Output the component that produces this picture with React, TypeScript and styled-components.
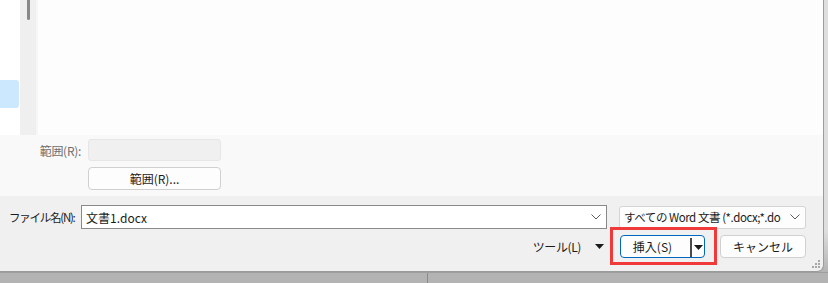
import styled, { createGlobalStyle } from 'styled-components';

const GlobalStyle = createGlobalStyle`
  html, body {
    margin: 0;
    padding: 0;
    background: #b4b4b4;
  }
  body {
    font-family: 'Noto Sans CJK JP', 'Noto Sans', sans-serif;
    font-size: 12px;
    color: #1b1b1b;
  }
`;

const Desktop = styled.div`
  width: 828px;
  height: 283px;
  overflow: hidden;
  display: flex;
  flex-direction: column;
  background: #b4b4b4;
`;

const TopRow = styled.div`
  display: flex;
  height: 272px;
`;

const RightStrip = styled.div`
  flex: 1;
  background: linear-gradient(#dedede 0, #dedede 230px, #b4b4b4 272px);
`;

const Window = styled.div`
  width: 823px;
  height: 271px;
  display: flex;
  flex-direction: column;
  border-right: 1px solid #9c9c9c;
  border-bottom: 1px solid #9a9a9a;
  border-bottom-right-radius: 7px;
  overflow: hidden;
  background: #f0f0f0;
`;

const Behind = styled.div`
  flex: 1;
  display: flex;
  border-top: 1px solid #9e9e9e;
`;

const BehindPane = styled.div<{ $width?: number }>`
  width: ${(p) => (p.$width ? `${p.$width}px` : 'auto')};
  flex: ${(p) => (p.$width ? 'none' : 1)};
  border-right: ${(p) => (p.$width ? '1px solid #8c8c8c' : 'none')};
  background: #b3b3b3;
`;

const Browser = styled.div`
  height: 135px;
  display: flex;
  background: #fdfdfd;
`;

const NavPane = styled.div`
  width: 20px;
  background: #ffffff;
  padding-top: 80px;
  box-sizing: border-box;
`;

const NavSelected = styled.div`
  width: 19px;
  height: 28px;
  background: #cce8ff;
  border-radius: 0 3px 3px 0;
`;

const ScrollTrack = styled.div`
  width: 16px;
  background: #efefef;
  display: flex;
  justify-content: center;
`;

const ScrollThumb = styled.div`
  width: 3px;
  height: 20px;
  margin-left: 1px;
  border-radius: 0 0 2px 2px;
  background: #898989;
`;

const ViewGap = styled.div`
  width: 2px;
  background: #f6f6f6;
`;

const FileView = styled.div`
  flex: 1;
  background: #fdfdfd;
`;

const RangeBand = styled.div`
  height: 61px;
  background: #f9f9f9;
  display: grid;
  grid-template-columns: 81px 133px;
  column-gap: 7px;
  row-gap: 6px;
  padding-top: 4px;
  box-sizing: border-box;
  align-content: start;
`;

const RangeLabel = styled.span`
  justify-self: end;
  align-self: center;
  color: #6e6e6e;
  letter-spacing: -0.3px;
`;

const DisabledField = styled.div`
  height: 22px;
  box-sizing: border-box;
  border: 1px solid #e6e6e6;
  border-radius: 3px;
  background: #f0f0f0;
`;

const Button = styled.button<{ $primary?: boolean; $width: number }>`
  width: ${(p) => p.$width}px;
  height: 23px;
  box-sizing: border-box;
  padding: 0;
  font: inherit;
  color: #1b1b1b;
  background: #fdfdfd;
  border: 1px solid ${(p) => (p.$primary ? '#0067c0' : '#d0d0d0')};
  border-radius: 4px;
  display: flex;
  align-items: center;
  justify-content: center;
  position: relative;
`;

const Footer = styled.div`
  flex: 1;
  display: flex;
  flex-direction: column;
  padding: 9px 18px 0 9px;
  gap: 6px;
`;

const NameRow = styled.div`
  display: flex;
  align-items: center;
  height: 24px;
`;

const NameLabel = styled.span`
  flex: none;
  width: 72px;
  font-size: 11.5px;
  letter-spacing: -1.25px;
  white-space: nowrap;
`;

const NameInput = styled.div`
  flex: none;
  width: 526px;
  height: 24px;
  box-sizing: border-box;
  border: 1px solid #8a8a8a;
  background: #ffffff;
  display: flex;
  align-items: center;
  padding: 0 5px 0 4px;
`;

const InputText = styled.span`
  flex: 1;
  min-width: 0;
  white-space: nowrap;
  overflow: hidden;
`;

const FilterText = styled(InputText)`
  font-size: 11.5px;
  letter-spacing: -0.45px;
  margin-right: 3px;
`;

const FilterCombo = styled.div`
  flex: none;
  margin-left: 12px;
  width: 187px;
  height: 23px;
  box-sizing: border-box;
  border: 1px solid #d4d4d4;
  border-radius: 3px;
  background: #fdfdfd;
  display: flex;
  align-items: center;
  padding: 0 5px 0 4px;
`;

const ActionRow = styled.div`
  display: flex;
  align-items: center;
  justify-content: flex-end;
  height: 23px;
`;

const ToolsMenu = styled.span`
  display: flex;
  align-items: center;
  margin-right: 16px;
  letter-spacing: -0.4px;
  gap: 14px;
`;

const InsertWrap = styled.div`
  position: relative;
  margin-right: 15px;
`;

const Highlight = styled.div`
  position: absolute;
  left: -10px;
  top: -8px;
  width: 107px;
  height: 38px;
  box-sizing: border-box;
  border: 3px solid #f03a3a;
  pointer-events: none;
`;

const SplitBar = styled.span`
  position: absolute;
  left: 69px;
  top: 2px;
  width: 2px;
  height: 19px;
  background: #4a4a4a;
`;

const SplitArrow = styled.span`
  position: absolute;
  left: 73px;
  top: 9px;
  display: flex;
`;

const InsertLabel = styled.span`
  margin-right: 20px;
`;

const Grip = styled.div`
  position: absolute;
  right: 3px;
  bottom: 3px;
  display: flex;
`;

const FooterFrame = styled.div`
  position: relative;
  flex: 1;
  display: flex;
`;

const Chevron = () => (
  <svg width="10" height="6" viewBox="0 0 10 6">
    <polyline points="0.5,0.5 5,5 9.5,0.5" fill="none" stroke="#5c5c5c" strokeWidth="1" />
  </svg>
);

const Triangle = () => (
  <svg width="9" height="5" viewBox="0 0 9 5" style={{ display: 'block' }}>
    <polygon points="0,0 9,0 4.5,5" fill="#1b1b1b" />
  </svg>
);

const GripDots = () => (
  <svg width="8" height="8" viewBox="0 0 8 8">
    {[
      [6, 0],
      [3, 3],
      [6, 3],
      [0, 6],
      [3, 6],
      [6, 6],
    ].map(([x, y]) => (
      <rect key={`${x}-${y}`} x={x} y={y} width="2" height="2" fill="#a8a8a8" />
    ))}
  </svg>
);

export default function App() {
  return (
    <>
      <GlobalStyle />
      <Desktop>
        <TopRow>
          <Window>
            <Browser>
              <NavPane>
                <NavSelected />
              </NavPane>
              <ScrollTrack>
                <ScrollThumb />
              </ScrollTrack>
              <ViewGap />
              <FileView />
            </Browser>
            <RangeBand>
              <RangeLabel>範囲(R):</RangeLabel>
              <DisabledField />
              <span />
              <Button $width={133}>範囲(R)...</Button>
            </RangeBand>
            <FooterFrame>
              <Footer>
                <NameRow>
                  <NameLabel>ファイル名(N):</NameLabel>
                  <NameInput>
                    <InputText>文書1.docx</InputText>
                    <Chevron />
                  </NameInput>
                  <FilterCombo>
                    <FilterText>すべての Word 文書 (*.docx;*.do</FilterText>
                    <Chevron />
                  </FilterCombo>
                </NameRow>
                <ActionRow>
                  <ToolsMenu>
                    ツール(L)
                    <Triangle />
                  </ToolsMenu>
                  <InsertWrap>
                    <Button $primary $width={85}>
                      <InsertLabel>挿入(S)</InsertLabel>
                      <SplitBar />
                      <SplitArrow>
                        <Triangle />
                      </SplitArrow>
                    </Button>
                    <Highlight />
                  </InsertWrap>
                  <Button $width={86}>キャンセル</Button>
                </ActionRow>
              </Footer>
              <Grip>
                <GripDots />
              </Grip>
            </FooterFrame>
          </Window>
          <RightStrip />
        </TopRow>
        <Behind>
          <BehindPane $width={427} />
          <BehindPane />
        </Behind>
      </Desktop>
    </>
  );
}
